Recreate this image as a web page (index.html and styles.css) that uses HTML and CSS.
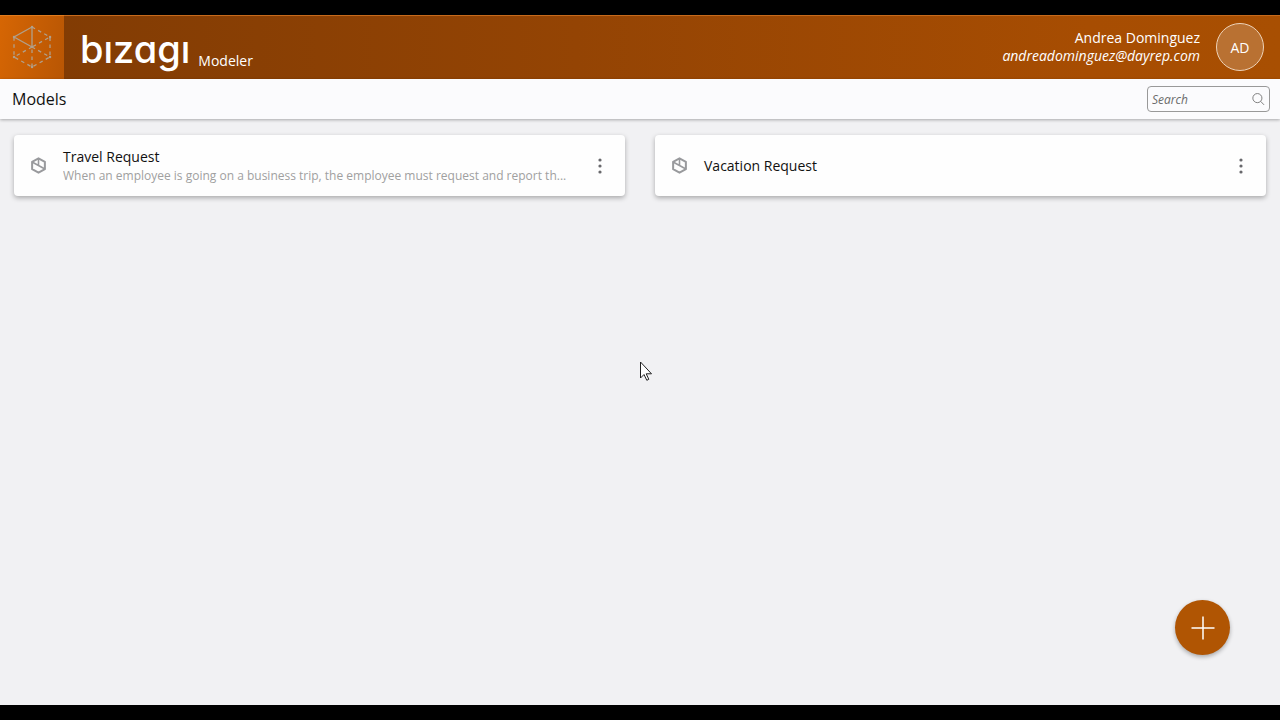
FILE: index.html
```html
<!DOCTYPE html>
<html lang="en">
<head>
<meta charset="utf-8">
<meta name="viewport" content="width=device-width, initial-scale=1">
<title>Bizagi Modeler</title>
<link rel="stylesheet" href="styles.css">
</head>
<body>
<svg class="sprite" aria-hidden="true">
  <symbol id="model-icon" viewBox="0 0 16 16">
    <path d="M8 1.2 L14 4.5 V11.5 L8 14.8 L2 11.5 V4.5 Z" fill="none" stroke="currentColor" stroke-width="1.9" stroke-linejoin="round"/>
    <path d="M8 1.2 V8 M2 4.7 L14 11.3" fill="none" stroke="currentColor" stroke-width="1.5"/>
  </symbol>
  <symbol id="more-icon" viewBox="0 0 4 16">
    <g fill="currentColor"><circle cx="2" cy="2" r="1.6"/><circle cx="2" cy="8" r="1.6"/><circle cx="2" cy="14" r="1.6"/></g>
  </symbol>
</svg>
<div class="app">
  <header class="topbar">
    <div class="cube">
      <svg width="42" height="44" viewBox="0 0 42 44" fill="none" stroke="#b0a08c" aria-hidden="true">
        <path d="M21 2 V22 L3 12 Z" stroke-width="1.3"/>
        <path d="M21 2 L39 12 V32 L21 42 L3 32 V12 M21 42 V22 L39 12 M21 22 L39 32 M21 22 L3 32" stroke-width="1.3" stroke-dasharray="3.5 3.5"/>
        <path d="M21 2h.1M3 12h.1M39 12h.1M21 22h.1M3 32h.1M39 32h.1M21 42h.1" stroke-width="2.4" stroke-linecap="round"/>
      </svg>
    </div>
    <div class="brand">
      <span class="wordmark">bızagı</span>
      <span class="product">Modeler</span>
    </div>
    <div class="user">
      <div class="identity">
        <span class="name">Andrea Dominguez</span>
        <span class="email">andreadominguez@dayrep.com</span>
      </div>
      <button class="avatar" type="button">AD</button>
    </div>
  </header>
  <div class="toolbar">
    <h1 class="title">Models</h1>
    <div class="search">
      <input class="search-input" type="search" placeholder="Search" aria-label="Search">
      <svg width="13" height="13" viewBox="0 0 14 14" fill="none" stroke="#777" aria-hidden="true"><circle cx="5.8" cy="5.5" r="4.9"/><path d="M9.3 9 L13 12.8"/></svg>
    </div>
  </div>
  <main class="models">
    <article class="card">
      <svg class="model-icon" aria-hidden="true"><use href="#model-icon"/></svg>
      <div class="details">
        <h2 class="model-name">Travel Request</h2>
        <p class="description">When an employee is going on a business trip, the employee must request and report th...</p>
      </div>
      <button class="more" type="button" aria-label="Travel Request options"><svg class="more-icon"><use href="#more-icon"/></svg></button>
    </article>
    <article class="card">
      <svg class="model-icon" aria-hidden="true"><use href="#model-icon"/></svg>
      <div class="details">
        <h2 class="model-name">Vacation Request</h2>
      </div>
      <button class="more" type="button" aria-label="Vacation Request options"><svg class="more-icon"><use href="#more-icon"/></svg></button>
    </article>
  </main>
  <button class="add" type="button" aria-label="New model">
    <svg width="24" height="24" viewBox="0 0 24 24" fill="none" stroke="#fff" stroke-width="1.5"><path d="M12 .5V23.5M.5 12H23.5"/></svg>
  </button>
  <svg class="pointer" width="14" height="21" viewBox="0 0 14 21" aria-hidden="true"><path d="M.5 1 V17 L4 13.5 L6.8 19.3 L8.8 18.3 L6.2 12.8 H11.5 Z" fill="#fff" stroke="#222" stroke-width="1"/></svg>
</div>
</body>
</html>
```
FILE: styles.css
```css
* {
  box-sizing: border-box;
}

body {
  margin: 0;
  background: #000;
  font-family: "Open Sans", "Noto Sans", sans-serif;
  font-size: 14px;
  color: #111;
}

button,
input {
  font: inherit;
}

button {
  border: 0;
  padding: 0;
  cursor: pointer;
}

.sprite {
  position: absolute;
  width: 0;
  height: 0;
}

.app {
  position: relative;
  display: flex;
  flex-direction: column;
  min-height: 100vh;
  border-top: 15px solid #000;
  border-bottom: 15px solid #000;
  background: #f1f1f3;
}

.topbar {
  display: flex;
  height: 64px;
  background: linear-gradient(90deg, #803b04, #944404 45%, #a74d02 85%, #a84f02);
  box-shadow: inset 0 1px #c66a1c;
  color: #fff;
}

.cube {
  display: flex;
  align-items: center;
  justify-content: center;
  width: 64px;
  background: linear-gradient(100deg, #d66604, #b85604);
  box-shadow: inset 0 1px #e07b1d;
}

.brand {
  display: flex;
  align-items: flex-start;
  gap: 8px;
  padding-left: 16px;
}

.wordmark {
  font-family: Inter, sans-serif;
  font-size: 38px;
  font-weight: 500;
  line-height: 68px;
  font-feature-settings: "cv11";
}

.product {
  padding-top: 36px;
  line-height: 20px;
}

.user {
  display: flex;
  align-items: center;
  gap: 16px;
  margin-left: auto;
  padding-right: 16px;
}

.identity {
  display: flex;
  flex-direction: column;
  align-items: flex-end;
  line-height: 18px;
}

.email {
  font-style: italic;
}

.avatar {
  width: 48px;
  height: 48px;
  border: 1px solid #eed3b9;
  border-radius: 50%;
  background: #b97132;
  color: #fff;
}

.toolbar {
  display: flex;
  align-items: center;
  justify-content: space-between;
  height: 40px;
  padding: 0 10px 0 12px;
  background: #fbfbfd;
  box-shadow: 0 1px 3px rgba(0, 0, 0, 0.3);
}

.title {
  margin: 0;
  font-size: 16px;
  font-weight: 400;
}

.search {
  display: flex;
  align-items: center;
  width: 123px;
  height: 26px;
  padding: 0 4px;
  border: 1px solid #999;
  border-radius: 4px;
}

.search-input {
  flex: 1;
  min-width: 0;
  padding: 0;
  border: 0;
  outline: 0;
  background: none;
  font-size: 12px;
  font-style: italic;
}

.search-input::placeholder {
  color: #6b6b6b;
}

.models {
  display: grid;
  grid-template-columns: 1fr 1fr;
  gap: 30px;
  padding: 16px 14px;
}

.card {
  display: flex;
  align-items: center;
  height: 61px;
  padding: 0 16px;
  border-radius: 4px;
  background: #fefefe;
  box-shadow: 0 2px 5px rgba(0, 0, 0, 0.3);
}

.model-icon {
  flex: none;
  width: 17px;
  height: 17px;
  margin-right: 16px;
  color: #999a9d;
}

.details {
  flex: 1;
  min-width: 0;
}

.model-name,
.description {
  margin: 0;
  font-weight: 400;
  line-height: 19px;
}

.model-name {
  font-size: 14px;
}

.description {
  overflow: hidden;
  font-size: 12px;
  color: #a0a0a0;
  white-space: nowrap;
  text-overflow: ellipsis;
}

.more {
  display: flex;
  justify-content: center;
  width: 18px;
  background: none;
  color: #68686c;
}

.more-icon {
  width: 4px;
  height: 16px;
}

.add {
  position: absolute;
  right: 50px;
  bottom: 50px;
  display: flex;
  align-items: center;
  justify-content: center;
  width: 55px;
  height: 55px;
  border-radius: 50%;
  background: #b05503;
  box-shadow: 0 2px 4px rgba(0, 0, 0, 0.3);
}

.pointer {
  position: absolute;
  left: 50%;
  top: 346px;
}
```
